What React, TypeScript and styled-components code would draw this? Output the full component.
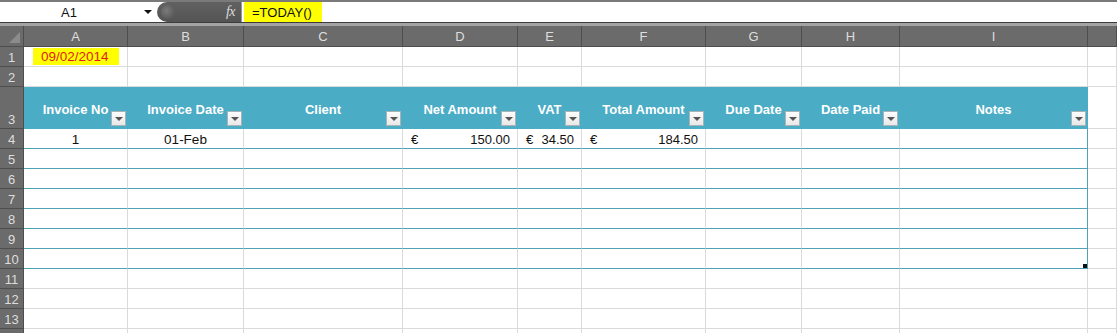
import React from "react";
import styled, { createGlobalStyle } from "styled-components";

const GlobalStyle = createGlobalStyle`
  html, body {
    margin: 0;
    padding: 0;
    background: #ffffff;
    overflow: hidden;
  }
  body {
    font-family: "Liberation Sans", Arial, sans-serif;
  }
`;

const TABLE_BLUE = "#4bacc6";
const TABLE_LINE = "#4fa3b4";
const GRID = "#dadada";
const HEAD_GRAY = "#6b6b6b";
const HEAD_LINE = "#4e4e4e";

const GRID_COLUMNS = "24px 104px 116px 159px 115px 64px 124px 96px 98px 188px 1fr";
const letters = ["A", "B", "C", "D", "E", "F", "G", "H", "I", ""];

type Align = "left" | "center" | "right";
type Tone = "plain" | "head" | "body";

const headers = [
  "Invoice No",
  "Invoice Date",
  "Client",
  "Net Amount",
  "VAT",
  "Total Amount",
  "Due Date",
  "Date Paid",
  "Notes",
];

const App: React.FC = () => {
  const bodyRows = [4, 5, 6, 7, 8, 9, 10];
  const plainRows = [11, 12, 13];

  const renderBodyRow = (n: number) => (
    <Row key={n} $height={20}>
      <RowHead>{n}</RowHead>
      {headers.map((h, i) => {
        const last = i === headers.length - 1;
        let content: React.ReactNode = null;
        if (n === 4) {
          if (i === 0) content = <CellText $align="center">1</CellText>;
          if (i === 1) content = <CellText $align="center">01-Feb</CellText>;
          if (i === 3) content = <Money symbol="€" value="150.00" />;
          if (i === 4) content = <Money symbol="€" value="34.50" />;
          if (i === 5) content = <Money symbol="€" value="184.50" />;
        }
        return (
          <Cell key={h} $tone="body" $edge={last}>
            {content}
            {last && n === 10 && <ResizeHandle />}
          </Cell>
        );
      })}
      <Cell $tone="plain" />
    </Row>
  );

  return (
    <>
      <GlobalStyle />
      <Sheet>
        <TopStrip />
        <FormulaBar>
          <NameBox>
            <NameText>A1</NameText>
            <DropArrow />
          </NameBox>
          <FxPill>
            <PillKnob />
            <FxLabel>fx</FxLabel>
          </FxPill>
          <FormulaInput>
            <FormulaMark>=TODAY()</FormulaMark>
          </FormulaInput>
        </FormulaBar>
        <BarDivider />

        <Row $height={21}>
          <Corner>
            <CornerTriangle />
          </Corner>
          {letters.map((l, i) => (
            <ColHead key={i}>{l}</ColHead>
          ))}
        </Row>

        <Row $height={20}>
          <RowHead>1</RowHead>
          <Cell $tone="plain">
            <DateMark>09/02/2014</DateMark>
          </Cell>
          {letters.slice(1).map((l, i) => (
            <Cell key={i} $tone="plain" />
          ))}
        </Row>

        <Row $height={20}>
          <RowHead>2</RowHead>
          {letters.map((l, i) => (
            <Cell key={i} $tone="plain" />
          ))}
        </Row>

        <Row $height={42}>
          <RowHead>3</RowHead>
          {headers.map((h) => (
            <Cell key={h} $tone="head">
              <HeadText>{h}</HeadText>
              <FilterButton>
                <FilterArrow />
              </FilterButton>
            </Cell>
          ))}
          <Cell $tone="plain" />
        </Row>

        {bodyRows.map(renderBodyRow)}

        {plainRows.map((n) => (
          <Row key={n} $height={20}>
            <RowHead>{n}</RowHead>
            {letters.map((l, i) => (
              <Cell key={i} $tone="plain" />
            ))}
          </Row>
        ))}

        {/* sliver of row 14 at the bottom edge */}
        <Row $height={20}>
          <RowHead />
          {letters.map((l, i) => (
            <Cell key={i} $tone="plain" />
          ))}
        </Row>
      </Sheet>
    </>
  );
};

const Money: React.FC<{ symbol: string; value: string }> = ({ symbol, value }) => (
  <MoneyBox>
    <span>{symbol}</span>
    <span>{value}</span>
  </MoneyBox>
);

const Sheet = styled.div`
  width: 1117px;
  height: 333px;
  overflow: hidden;
  background: #ffffff;
`;

const TopStrip = styled.div`
  height: 2px;
  background: #7a7a7a;
`;

const FormulaBar = styled.div`
  height: 20px;
  display: flex;
  align-items: stretch;
  background: #ffffff;
`;

const NameBox = styled.div`
  width: 157px;
  display: flex;
  align-items: center;
  position: relative;
`;

const NameText = styled.span`
  margin-left: 61px;
  font-size: 13px;
  color: #111;
`;

const DropArrow = styled.span`
  position: absolute;
  left: 144px;
  top: 8px;
  width: 0;
  height: 0;
  border-left: 4px solid transparent;
  border-right: 4px solid transparent;
  border-top: 4px solid #111;
`;

const FxPill = styled.div`
  width: 84px;
  display: flex;
  align-items: center;
  justify-content: space-between;
  background: linear-gradient(#616161, #545454);
  border-radius: 11px 0 0 11px;
  padding: 0 6px 0 4px;
  box-sizing: border-box;
`;

const PillKnob = styled.span`
  width: 14px;
  height: 14px;
  border-radius: 50%;
  background: radial-gradient(circle at 40% 40%, #7a7a7a, #4e4e4e);
`;

const FxLabel = styled.span`
  font-family: "Liberation Serif", "Times New Roman", serif;
  font-style: italic;
  font-size: 14px;
  color: #dcdcdc;
  letter-spacing: -0.5px;
`;

const FormulaInput = styled.div`
  flex: 1;
  display: flex;
  align-items: stretch;
  padding-left: 2px;
  border-left: 1px solid #9a9a9a;
`;

const FormulaMark = styled.span`
  display: flex;
  align-items: center;
  background: #ffff00;
  padding: 0 10px 0 8px;
  font-size: 13px;
  color: #111;
`;

const BarDivider = styled.div`
  height: 3px;
  border-top: 1px solid #3c3c3c;
  background: #a3a3a3;
`;

const Row = styled.div<{ $height: number }>`
  display: grid;
  grid-template-columns: ${GRID_COLUMNS};
  height: ${(p) => p.$height}px;
`;

const Corner = styled.div`
  background: ${HEAD_GRAY};
  border-right: 1px solid ${HEAD_LINE};
  border-bottom: 1px solid ${HEAD_LINE};
  box-sizing: border-box;
  position: relative;
`;

const CornerTriangle = styled.span`
  position: absolute;
  right: 3px;
  bottom: 3px;
  width: 0;
  height: 0;
  border-left: 11px solid transparent;
  border-bottom: 11px solid #8c8c8c;
`;

const ColHead = styled.div`
  background: ${HEAD_GRAY};
  color: #dedede;
  font-size: 13px;
  display: flex;
  align-items: center;
  justify-content: center;
  padding-top: 1px;
  border-right: 1px solid ${HEAD_LINE};
  border-bottom: 1px solid ${HEAD_LINE};
  box-sizing: border-box;
`;

const RowHead = styled.div`
  background: ${HEAD_GRAY};
  color: #dedede;
  font-size: 13px;
  display: flex;
  align-items: flex-end;
  justify-content: center;
  padding-bottom: 1px;
  border-right: 1px solid ${HEAD_LINE};
  border-bottom: 1px solid ${HEAD_LINE};
  box-sizing: border-box;
`;

const Cell = styled.div<{ $tone: Tone; $edge?: boolean }>`
  position: relative;
  box-sizing: border-box;
  display: flex;
  align-items: center;
  min-width: 0;
  background: ${(p) => (p.$tone === "head" ? TABLE_BLUE : "#ffffff")};
  border-bottom: 1px solid
    ${(p) => (p.$tone === "head" ? TABLE_BLUE : p.$tone === "body" ? TABLE_LINE : GRID)};
  border-right: 1px solid
    ${(p) => (p.$tone === "head" ? TABLE_BLUE : p.$edge ? TABLE_LINE : GRID)};
`;

const CellText = styled.span<{ $align: Align }>`
  flex: 1;
  text-align: ${(p) => p.$align};
  font-size: 13.5px;
  color: #111;
  padding-top: 2px;
`;

const MoneyBox = styled.div`
  flex: 1;
  display: flex;
  justify-content: space-between;
  padding: 2px 7px 0 8px;
  font-size: 13px;
  color: #111;
`;

const HeadText = styled.span`
  flex: 1;
  text-align: center;
  font-size: 13px;
  font-weight: bold;
  color: #ffffff;
  margin-top: 3px;
  white-space: nowrap;
`;

const FilterButton = styled.span`
  position: absolute;
  right: 1px;
  bottom: 2px;
  width: 15px;
  height: 15px;
  box-sizing: border-box;
  border: 1px solid #a9b4b8;
  background: linear-gradient(#fdfdfd, #e8e8e8);
  display: flex;
  align-items: center;
  justify-content: center;
`;

const FilterArrow = styled.span`
  width: 0;
  height: 0;
  border-left: 4px solid transparent;
  border-right: 4px solid transparent;
  border-top: 4px solid #555;
  margin-top: 1px;
`;

const DateMark = styled.span`
  margin-left: 9px;
  background: #ffff00;
  color: #e01b1b;
  font-size: 13.5px;
  padding: 1px 10px 1px 8px;
`;

const ResizeHandle = styled.span`
  position: absolute;
  right: 0;
  bottom: 0;
  width: 4px;
  height: 4px;
  background: #111;
`;

export default App;
